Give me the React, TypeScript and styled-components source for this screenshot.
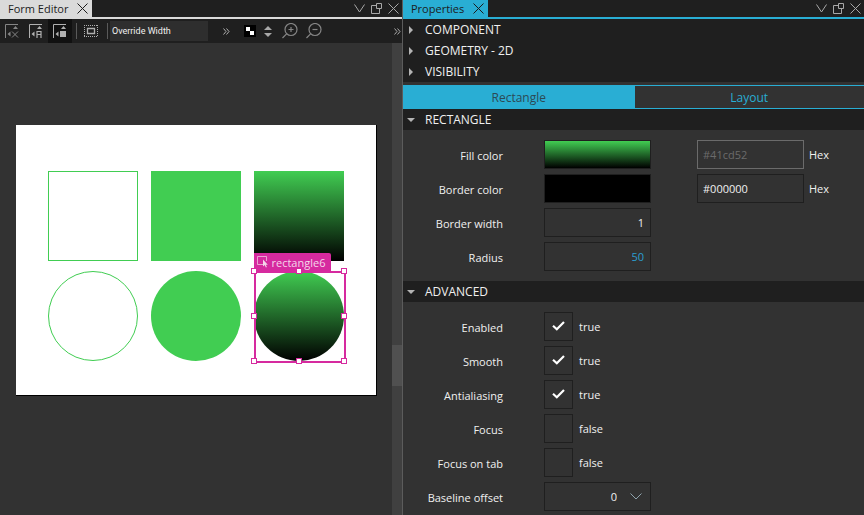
import React, { useState } from "react";
import styled, { createGlobalStyle, css } from "styled-components";

const cyan = "#29aed4";
const dark = "#1f1f1f";
const panel = "#323232";
const green = "#41cd52";
const magenta = "#d62a9f";

const GlobalStyle = createGlobalStyle`
  * { box-sizing: border-box; }
  body { margin: 0; background: ${panel}; }
  body, button, input, select {
    font-family: "Open Sans", "Noto Sans", sans-serif;
    font-size: 11px;
    color: #f0f0f0;
  }
`;

const Window = styled.main`
  display: grid;
  grid-template-columns: minmax(0, 402fr) 1px minmax(0, 461fr);
  height: 100vh;
  overflow: hidden;
`;

const Splitter = styled.div`
  background: #5c5c5c;
`;

const Pane = styled.section`
  display: flex;
  flex-direction: column;
  min-width: 0;
  min-height: 0;
  overflow: hidden;
  background: ${panel};
`;

const TitleBar = styled.header<{ $accent: string }>`
  display: flex;
  flex: none;
  justify-content: space-between;
  height: 19px;
  background: ${dark};
  border-bottom: 2px solid ${(p) => p.$accent};
`;

const TitleTab = styled.div<{ $accent: string }>`
  display: flex;
  align-items: center;
  gap: 9px;
  padding: 0 4px 0 8px;
  background: ${(p) => p.$accent};
  color: #1c1c1c;
  white-space: nowrap;
`;

const Title = styled.h1`
  margin: 0;
  font-size: 11px;
  line-height: 16px;
  font-weight: 400;
`;

const IconButton = styled.button`
  display: flex;
  align-items: center;
  justify-content: center;
  flex: none;
  padding: 0;
  border: 0;
  background: none;
  color: inherit;
`;

const WindowButtons = styled.div`
  display: flex;
  align-items: center;
  gap: 6px;
  padding-right: 3px;
  color: #a8a8a8;
`;

const Toolbar = styled.div`
  display: flex;
  flex: none;
  align-items: center;
  height: 24px;
  padding-right: 1px;
  background: ${dark};
  color: #a8a8a8;
`;

const ToolButton = styled(IconButton)<{ $active?: boolean; $dim?: boolean }>`
  width: 24px;
  height: 24px;
  background: ${(p) => (p.$active ? "#111" : "none")};
  color: ${(p) => (p.$dim ? "#858585" : "#b0b0b0")};
`;

const SpinButton = styled(IconButton)`
  width: 12px;
  height: 24px;
  margin-right: 4px;
`;

const Separator = styled.span`
  flex: none;
  width: 1px;
  height: 16px;
  margin: 0 2px 0 4px;
  background: #5a5a5a;
`;

const WidthInput = styled.input`
  width: 98px;
  height: 20px;
  margin: 0 6px 0 0;
  padding: 0 2px;
  border: 0;
  background: #2e2e2e;
  font-family: Roboto, sans-serif;
  font-size: 9px;
  &::placeholder { color: #f0f0f0; opacity: 1; }
`;

const Spacer = styled.span`
  flex: 1;
`;

const Workspace = styled.div`
  display: flex;
  flex: 1;
  min-height: 0;
`;

const Canvas = styled.div`
  flex: 1;
  display: flex;
  justify-content: center;
  align-items: flex-start;
  padding-top: 82px;
  overflow: hidden;
`;

const ScrollTrack = styled.div`
  flex: none;
  width: 10px;
  background: #404040;
  display: grid;
  grid-template-rows: 302fr 41fr 129fr;
`;

const ScrollThumb = styled.div`
  grid-row: 2;
  background: #505050;
`;

const Artboard = styled.div`
  display: grid;
  grid-template-columns: repeat(3, 90px);
  grid-auto-rows: 90px;
  gap: 10px 13px;
  padding: 46px 32px 34px;
  background: #fff;
  border-right: 1px solid #000;
  border-bottom: 1px solid #000;
`;

const Shape = styled.div<{ $fill: "none" | "solid" | "gradient"; $round?: boolean }>`
  position: relative;
  border-radius: ${(p) => (p.$round ? "50%" : "0")};
  ${(p) => p.$fill === "none" && css`border: 1px solid ${green};`}
  ${(p) => p.$fill === "solid" && css`background: ${green};`}
  ${(p) => p.$fill === "gradient" && css`background: linear-gradient(${green}, #000);`}
`;

const Selection = styled.div`
  position: absolute;
  inset: 0 -2px -2px 0;
  border: 2px solid ${magenta};
`;

const Handle = styled.i<{ $x: number; $y: number }>`
  position: absolute;
  left: ${(p) => p.$x}%;
  top: ${(p) => p.$y}%;
  width: 6px;
  height: 6px;
  transform: translate(-50%, -50%);
  background: #fff;
  border: 1px solid ${magenta};
`;

const SelectionLabel = styled.span`
  position: absolute;
  left: 0;
  bottom: 100%;
  display: flex;
  align-items: center;
  gap: 4px;
  height: 18px;
  padding: 0 6px 0 3px;
  background: ${magenta};
  color: #f4d6ea;
  border-radius: 0 2px 0 0;
`;

const SectionButton = styled.button`
  display: flex;
  flex: none;
  align-items: center;
  gap: 10px;
  width: 100%;
  height: 21px;
  padding: 0 4px;
  border: 0;
  background: ${dark};
  font-size: 12px;
  text-align: left;
`;

const Tabs = styled.div`
  display: flex;
  flex: none;
  height: 24px;
  margin-top: 3px;
`;

const Tab = styled.button<{ $on: boolean }>`
  flex: 1;
  padding: 0;
  border: 1px solid ${cyan};
  border-right: 0;
  background: ${(p) => (p.$on ? cyan : panel)};
  color: ${(p) => (p.$on ? "#2c4a55" : cyan)};
  font-size: 12px;
`;

const Form = styled.div`
  display: flex;
  flex: none;
  flex-direction: column;
  gap: 5px;
  padding: 10px 0;
`;

const Row = styled.div`
  display: grid;
  grid-template-columns: 100px 107px 1fr;
  column-gap: 41px;
  height: 29px;
  align-items: center;
`;

const Name = styled.label`
  padding-top: 2px;
  text-align: right;
  white-space: nowrap;
`;

const box = css`
  width: 107px;
  height: 29px;
  margin: 0;
  border: 1px solid ${dark};
  border-radius: 0;
  background: ${panel};
`;

const Swatch = styled.button<{ $paint: string }>`
  ${box}
  background: ${(p) => p.$paint};
`;

const NumberInput = styled.input<{ $changed?: boolean }>`
  ${box}
  padding: 0 6px;
  text-align: right;
  color: ${(p) => (p.$changed ? "#2b9ed0" : "#f0f0f0")};
`;

const HexField = styled.label`
  display: flex;
  align-items: center;
  gap: 5px;
  padding-left: 5px;
`;

const HexInput = styled.input`
  ${box}
  padding: 0 5px;
  &:disabled { border-color: #6b6b6b; color: #6b6b6b; }
`;

const CheckField = styled.div`
  display: flex;
  align-items: center;
  gap: 6px;
`;

const CheckBox = styled.span`
  position: relative;
  display: flex;
`;

const CheckInput = styled.input`
  ${box}
  width: 29px;
  appearance: none;
`;

const Overlay = styled.svg<{ $right: number; $top: number }>`
  position: absolute;
  right: ${(p) => p.$right}px;
  top: ${(p) => p.$top}px;
  pointer-events: none;
`;

const Combo = styled.span`
  position: relative;
  display: flex;
`;

const ComboSelect = styled.select`
  ${box}
  appearance: none;
  padding: 0 33px 0 6px;
  text-align: right;
  text-align-last: right;
`;

const CloseIcon = () => (
  <svg width="11" height="11" viewBox="0 0 11 11" fill="none" stroke="currentColor">
    <path d="M.5.5l10 10M10.5.5l-10 10" />
  </svg>
);

const ChevronIcon = () => (
  <svg width="11" height="9" viewBox="0 0 11 9" fill="none" stroke="currentColor">
    <path d="M.5.5l5 7.500 5-7.500" />
  </svg>
);

const FloatIcon = () => (
  <svg width="11" height="11" viewBox="0 0 11 11" fill="none" stroke="currentColor">
    <path d="M5.500.5h5v5h-5zM5 2.500H.5v8h8V6" />
  </svg>
);

const AnchorIcon = ({ kind }: { kind: "x" | "a" | "box" }) => (
  <svg width="14" height="14" viewBox="0 0 14 14" fill="none" stroke="currentColor">
    <path d="M.5 14V.5H13" />
    <path d="M8 5l2.500-3L13 5zM5.500 7.500l-3 2.500 3 2.500z" fill="currentColor" stroke="none" />
    {kind === "x" && <path d="M7 7.500l6 6M13 7.500l-6 6" />}
    {kind === "a" && <path d="M8 14V7.500h4V14M8 10.500h4" strokeWidth="1.200" />}
    {kind === "box" && <path d="M7 7h6v6H7z" fill="currentColor" stroke="none" />}
  </svg>
);

const BoundsIcon = () => (
  <svg width="14" height="12" viewBox="0 0 14 12" fill="none" stroke="currentColor">
    <path d="M0 .5h14M0 11.500h14M.5 0v12M13.500 0v12" strokeDasharray="1 1" />
    <path d="M3.500 3.500h7v5h-7z" strokeWidth="1.300" />
  </svg>
);

const MoreIcon = () => (
  <svg width="7" height="7" viewBox="0 0 7 7" fill="none" stroke="currentColor">
    <path d="M.5.5l2.500 3-2.500 3M3.500.5l2.500 3-2.500 3" />
  </svg>
);

const CheckerIcon = () => (
  <svg width="12" height="12" viewBox="0 0 12 12">
    <path d="M0 0h12v12H0z" fill="#000" />
    <path d="M2 2h4v4H2zM6 6h4v4H6z" fill="#fff" />
  </svg>
);

const SpinIcon = () => (
  <svg width="8" height="11" viewBox="0 0 8 11" fill="currentColor">
    <path d="M0 4L4 0l4 4zM0 7h8l-4 4z" />
  </svg>
);

const ZoomIcon = ({ plus }: { plus?: boolean }) => (
  <svg width="16" height="16" viewBox="0 0 16 16" fill="none" stroke="currentColor">
    <circle cx="9" cy="6.500" r="6" strokeWidth="1.200" />
    <path d="M4.800 10.700L.5 15" strokeWidth="1.200" />
    <path d={plus ? "M6.500 6.500h5M9 4v5" : "M6.500 6.500h5"} strokeWidth="1.200" />
  </svg>
);

const PickIcon = () => (
  <svg width="11" height="12" viewBox="0 0 11 12" fill="none" stroke="currentColor">
    <path d="M6 8.500H.5v-8h9V5" opacity=".7" />
    <path d="M6 3.500v7l1.700-1.500 1.200 2.600 1-.5-1.100-2.400h2z" fill="currentColor" stroke="none" />
  </svg>
);

const Arrow = ({ open }: { open: boolean }) => (
  <svg width="8" height="8" viewBox="0 0 8 8" fill="#b4b4b4">
    <path d={open ? "M0 2h8L4 6z" : "M2 0l4 4-4 4z"} />
  </svg>
);

function Bar({ title, accent }: { title: string; accent: string }) {
  return (
    <TitleBar $accent={accent}>
      <TitleTab $accent={accent}>
        <Title>{title}</Title>
        <IconButton aria-label={`Close ${title}`}><CloseIcon /></IconButton>
      </TitleTab>
      <WindowButtons>
        <IconButton aria-label="Pane menu"><ChevronIcon /></IconButton>
        <IconButton aria-label="Detach pane"><FloatIcon /></IconButton>
        <IconButton aria-label="Close pane"><CloseIcon /></IconButton>
      </WindowButtons>
    </TitleBar>
  );
}

function Section({ title, open = false }: { title: string; open?: boolean }) {
  return (
    <SectionButton aria-expanded={open}>
      <Arrow open={open} />
      {title}
    </SectionButton>
  );
}

function HexValue({ label, value, disabled }: { label: string; value: string; disabled?: boolean }) {
  return (
    <HexField>
      <HexInput aria-label={label} defaultValue={value} disabled={disabled} />
      Hex
    </HexField>
  );
}

function CheckRow({ id, name, initial }: { id: string; name: string; initial: boolean }) {
  const [on, setOn] = useState(initial);
  return (
    <Row>
      <Name htmlFor={id}>{name}</Name>
      <CheckField>
        <CheckBox>
          <CheckInput id={id} type="checkbox" checked={on} onChange={() => setOn(!on)} />
          {on && (
            <Overlay $right={8} $top={9} width="13" height="10" viewBox="0 0 13 10" fill="none" stroke="#fff" strokeWidth="2.200">
              <path d="M1 4.800l3.800 3.400L12 1" />
            </Overlay>
          )}
        </CheckBox>
        <span>{String(on)}</span>
      </CheckField>
    </Row>
  );
}

const handles = [[0, 0], [50, 0], [100, 0], [0, 50], [100, 50], [0, 100], [50, 100], [100, 100]];

const checks = [
  { id: "enabled", name: "Enabled", initial: true },
  { id: "smooth", name: "Smooth", initial: true },
  { id: "antialiasing", name: "Antialiasing", initial: true },
  { id: "focus", name: "Focus", initial: false },
  { id: "focus-tab", name: "Focus on tab", initial: false },
];

export default function App() {
  const [tab, setTab] = useState("Rectangle");
  return (
    <>
      <GlobalStyle />
      <Window>
        <Pane>
          <Bar title="Form Editor" accent="#dadada" />
          <Toolbar>
            <ToolButton aria-label="No snapping" $dim><AnchorIcon kind="x" /></ToolButton>
            <ToolButton aria-label="Snap with anchors"><AnchorIcon kind="a" /></ToolButton>
            <ToolButton aria-label="Snap without anchors" $active><AnchorIcon kind="box" /></ToolButton>
            <Separator />
            <ToolButton aria-label="Show bounding rectangles"><BoundsIcon /></ToolButton>
            <Separator />
            <WidthInput aria-label="Override Width" placeholder="Override Width" />
            <ToolButton aria-label="More size options"><MoreIcon /></ToolButton>
            <ToolButton aria-label="Canvas background"><CheckerIcon /></ToolButton>
            <SpinButton aria-label="Change background"><SpinIcon /></SpinButton>
            <ToolButton aria-label="Zoom in" $dim><ZoomIcon plus /></ToolButton>
            <ToolButton aria-label="Zoom out" $dim><ZoomIcon /></ToolButton>
            <Spacer />
            <IconButton aria-label="More tools"><MoreIcon /></IconButton>
          </Toolbar>
          <Workspace>
            <Canvas>
              <Artboard>
                <Shape $fill="none" />
                <Shape $fill="solid" />
                <Shape $fill="gradient" />
                <Shape $fill="none" $round />
                <Shape $fill="solid" $round />
                <Shape $fill="gradient" $round>
                  <Selection />
                  <SelectionLabel><PickIcon />rectangle6</SelectionLabel>
                  {handles.map(([x, y]) => <Handle key={`${x}-${y}`} $x={x} $y={y} />)}
                </Shape>
              </Artboard>
            </Canvas>
            <ScrollTrack><ScrollThumb /></ScrollTrack>
          </Workspace>
        </Pane>
        <Splitter />
        <Pane>
          <Bar title="Properties" accent={cyan} />
          <Section title="COMPONENT" />
          <Section title="GEOMETRY - 2D" />
          <Section title="VISIBILITY" />
          <Tabs role="tablist">
            {["Rectangle", "Layout"].map((t) => (
              <Tab key={t} role="tab" aria-selected={t === tab} $on={t === tab} onClick={() => setTab(t)}>{t}</Tab>
            ))}
          </Tabs>
          <Section title="RECTANGLE" open />
          <Form>
            <Row>
              <Name htmlFor="fill">Fill color</Name>
              <Swatch id="fill" $paint={`linear-gradient(${green}, #000)`} />
              <HexValue label="Fill color hex" value="#41cd52" disabled />
            </Row>
            <Row>
              <Name htmlFor="border">Border color</Name>
              <Swatch id="border" $paint="#000" />
              <HexValue label="Border color hex" value="#000000" />
            </Row>
            <Row>
              <Name htmlFor="border-width">Border width</Name>
              <NumberInput id="border-width" defaultValue="1" />
            </Row>
            <Row>
              <Name htmlFor="radius">Radius</Name>
              <NumberInput id="radius" defaultValue="50" $changed />
            </Row>
          </Form>
          <Section title="ADVANCED" open />
          <Form>
            {checks.map((c) => <CheckRow key={c.id} {...c} />)}
            <Row>
              <Name htmlFor="baseline">Baseline offset</Name>
              <Combo>
                <ComboSelect id="baseline"><option>0</option></ComboSelect>
                <Overlay $right={9} $top={11} width="12" height="7" viewBox="0 0 12 7" fill="none" stroke="#8fa3ad">
                  <path d="M.5.5L6 6 11.500.5" />
                </Overlay>
              </Combo>
            </Row>
          </Form>
        </Pane>
      </Window>
    </>
  );
}
